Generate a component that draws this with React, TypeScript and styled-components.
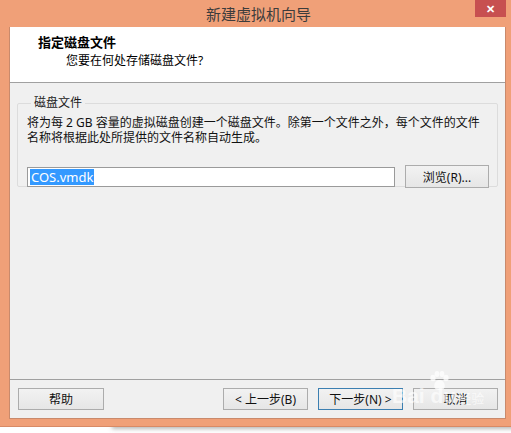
import React from "react";
import styled, { createGlobalStyle } from "styled-components";

const GlobalStyle = createGlobalStyle`
  html, body {
    margin: 0;
    padding: 0;
    background: #ffffff;
  }
  body {
    font-family: "Noto Sans", "Noto Sans CJK SC", sans-serif;
    font-size: 12px;
    color: #000;
  }
`;

const font = `"Noto Sans", "Noto Sans CJK SC", sans-serif`;

function PawIcon() {
  return (
    <svg width="22" height="20" viewBox="0 0 22 20">
      <g fill="rgba(255,255,255,0.75)">
        <ellipse cx="5" cy="7" rx="2.6" ry="3.2" />
        <ellipse cx="9" cy="3" rx="2.4" ry="3" />
        <ellipse cx="14" cy="3" rx="2.4" ry="3" />
        <ellipse cx="18" cy="7" rx="2.6" ry="3.2" />
        <path d="M11.5 9 C7 9 5 15 7 17.5 C9 19.5 14 19.5 16 17.5 C18 15 16 9 11.5 9 Z" />
      </g>
    </svg>
  );
}

function App() {
  return (
    <>
      <GlobalStyle />
      <Page>
        <Window>
          <TitleBar>
            <Title>新建虚拟机向导</Title>
            <CloseButton>✕</CloseButton>
          </TitleBar>
          <Inner>
            <Header>
              <HeaderTitle>指定磁盘文件</HeaderTitle>
              <HeaderSub>您要在何处存储磁盘文件?</HeaderSub>
            </Header>
            <Body>
              <Group>
                <Legend>磁盘文件</Legend>
                <Desc>
                  将为每 2 GB 容量的虚拟磁盘创建一个磁盘文件。除第一个文件之外，每个文件的文件
                </Desc>
                <Desc>名称将根据此处所提供的文件名称自动生成。</Desc>
                <FileRow>
                  <PathInput>
                    <Selected>COS.vmdk</Selected>
                  </PathInput>
                  <Button $width={84} $height={23}>
                    浏览(R)...
                  </Button>
                </FileRow>
              </Group>
            </Body>
            <Footer>
              <Button $width={86}>帮助</Button>
              <Spacer />
              <Button $width={85}>&lt; 上一步(B)</Button>
              <Button $width={85} $primary>
                下一步(N) &gt;
              </Button>
              <Button $width={85}>取消</Button>
            </Footer>
          </Inner>
          <Watermark>
            <PawSpot>
              <PawIcon />
            </PawSpot>
            Bai du<Jing>经验</Jing>
          </Watermark>
        </Window>
      </Page>
    </>
  );
}

export default App;

const Page = styled.div`
  width: 511px;
  height: 433px;
  overflow: hidden;
  background: #ffffff;
`;

const Window = styled.div`
  position: relative;
  width: 511px;
  height: 427px;
  box-sizing: border-box;
  background: #f0a078;
  padding: 0 5px 7px 9px;
  display: flex;
  flex-direction: column;
  box-shadow: 110px 4px 4px -2px rgba(120, 120, 120, 0.5);
  border-bottom: 1px solid #d88a66;
`;

const TitleBar = styled.div`
  height: 27px;
  display: flex;
  align-items: center;
  justify-content: center;
  position: relative;
`;

const Title = styled.div`
  font-family: ${font};
  font-size: 15px;
  color: #3c3c3c;
  margin-left: 2px;
  margin-top: -1px;
`;

const CloseButton = styled.div`
  position: absolute;
  top: 0;
  right: 0;
  width: 31px;
  height: 17px;
  background: #c75050;
  color: #ffffff;
  font-size: 11px;
  font-weight: bold;
  display: flex;
  align-items: center;
  justify-content: center;
`;

const Inner = styled.div`
  flex: 1;
  display: flex;
  flex-direction: column;
  background: #f0f0f0;
  border: 1px solid #c98a6c;
  border-top: none;
`;

const Header = styled.div`
  height: 56px;
  background: #ffffff;
  border-bottom: 1px solid #a0a0a0;
  box-sizing: border-box;
  padding: 7px 0 0 28px;
`;

const HeaderTitle = styled.div`
  font-family: ${font};
  font-weight: bold;
  font-size: 13px;
  line-height: 16px;
`;

const HeaderSub = styled.div`
  font-family: ${font};
  font-size: 12px;
  line-height: 16px;
  margin: 3px 0 0 28px;
`;

const Body = styled.div`
  flex: 1;
  padding: 14px 9px 0 7px;
  border-bottom: 1px solid #a0a0a0;
`;

const Group = styled.fieldset`
  margin: 0;
  padding: 6px 8px 5px 9px;
  border: 1px solid #dcdcdc;
  border-radius: 2px;
  height: 90px;
  box-sizing: border-box;
`;

const Legend = styled.legend`
  font-family: ${font};
  font-size: 12px;
  line-height: 12px;
  padding: 0 3px;
  margin-left: 4px;
  color: #1a1a1a;
`;

const Desc = styled.div`
  font-family: ${font};
  font-size: 12px;
  line-height: 15px;
  color: #111;
  white-space: nowrap;
`;

const FileRow = styled.div`
  display: flex;
  align-items: center;
  gap: 10px;
  margin-top: 20px;
`;

const PathInput = styled.div`
  width: 368px;
  height: 20px;
  box-sizing: border-box;
  background: #ffffff;
  border: 1px solid #9a9a9a;
  padding: 1px 2px;
  display: flex;
  align-items: center;
`;

const Selected = styled.span`
  background: #3399ff;
  color: #ffffff;
  font-family: "Noto Sans", sans-serif;
  font-size: 13px;
  line-height: 16px;
  padding: 0 1px;
`;

const Footer = styled.div`
  height: 38px;
  display: flex;
  align-items: center;
  padding: 0 7px 0 8px;
  gap: 10px;
`;

const Spacer = styled.div`
  flex: 1;
`;

const Button = styled.div<{ $width: number; $height?: number; $primary?: boolean }>`
  width: ${(p) => p.$width}px;
  height: ${(p) => p.$height ?? 22}px;
  box-sizing: border-box;
  border: 1px solid ${(p) => (p.$primary ? "#3c7fb1" : "#acacac")};
  background: linear-gradient(#f2f2f2, #e6e6e6);
  display: flex;
  align-items: center;
  justify-content: center;
  font-family: ${font};
  font-size: 12px;
  color: #111;
`;

const Watermark = styled.div`
  position: absolute;
  left: 392px;
  top: 384px;
  font-family: "Liberation Sans", sans-serif;
  font-size: 21px;
  font-weight: bold;
  color: rgba(255, 255, 255, 0.65);
  pointer-events: none;
  white-space: nowrap;
`;

const PawSpot = styled.span`
  position: absolute;
  left: 36px;
  top: -13px;
`;

const Jing = styled.span`
  font-family: "Noto Sans CJK SC", sans-serif;
  font-size: 13px;
  font-weight: normal;
  margin-left: 2px;
`;
